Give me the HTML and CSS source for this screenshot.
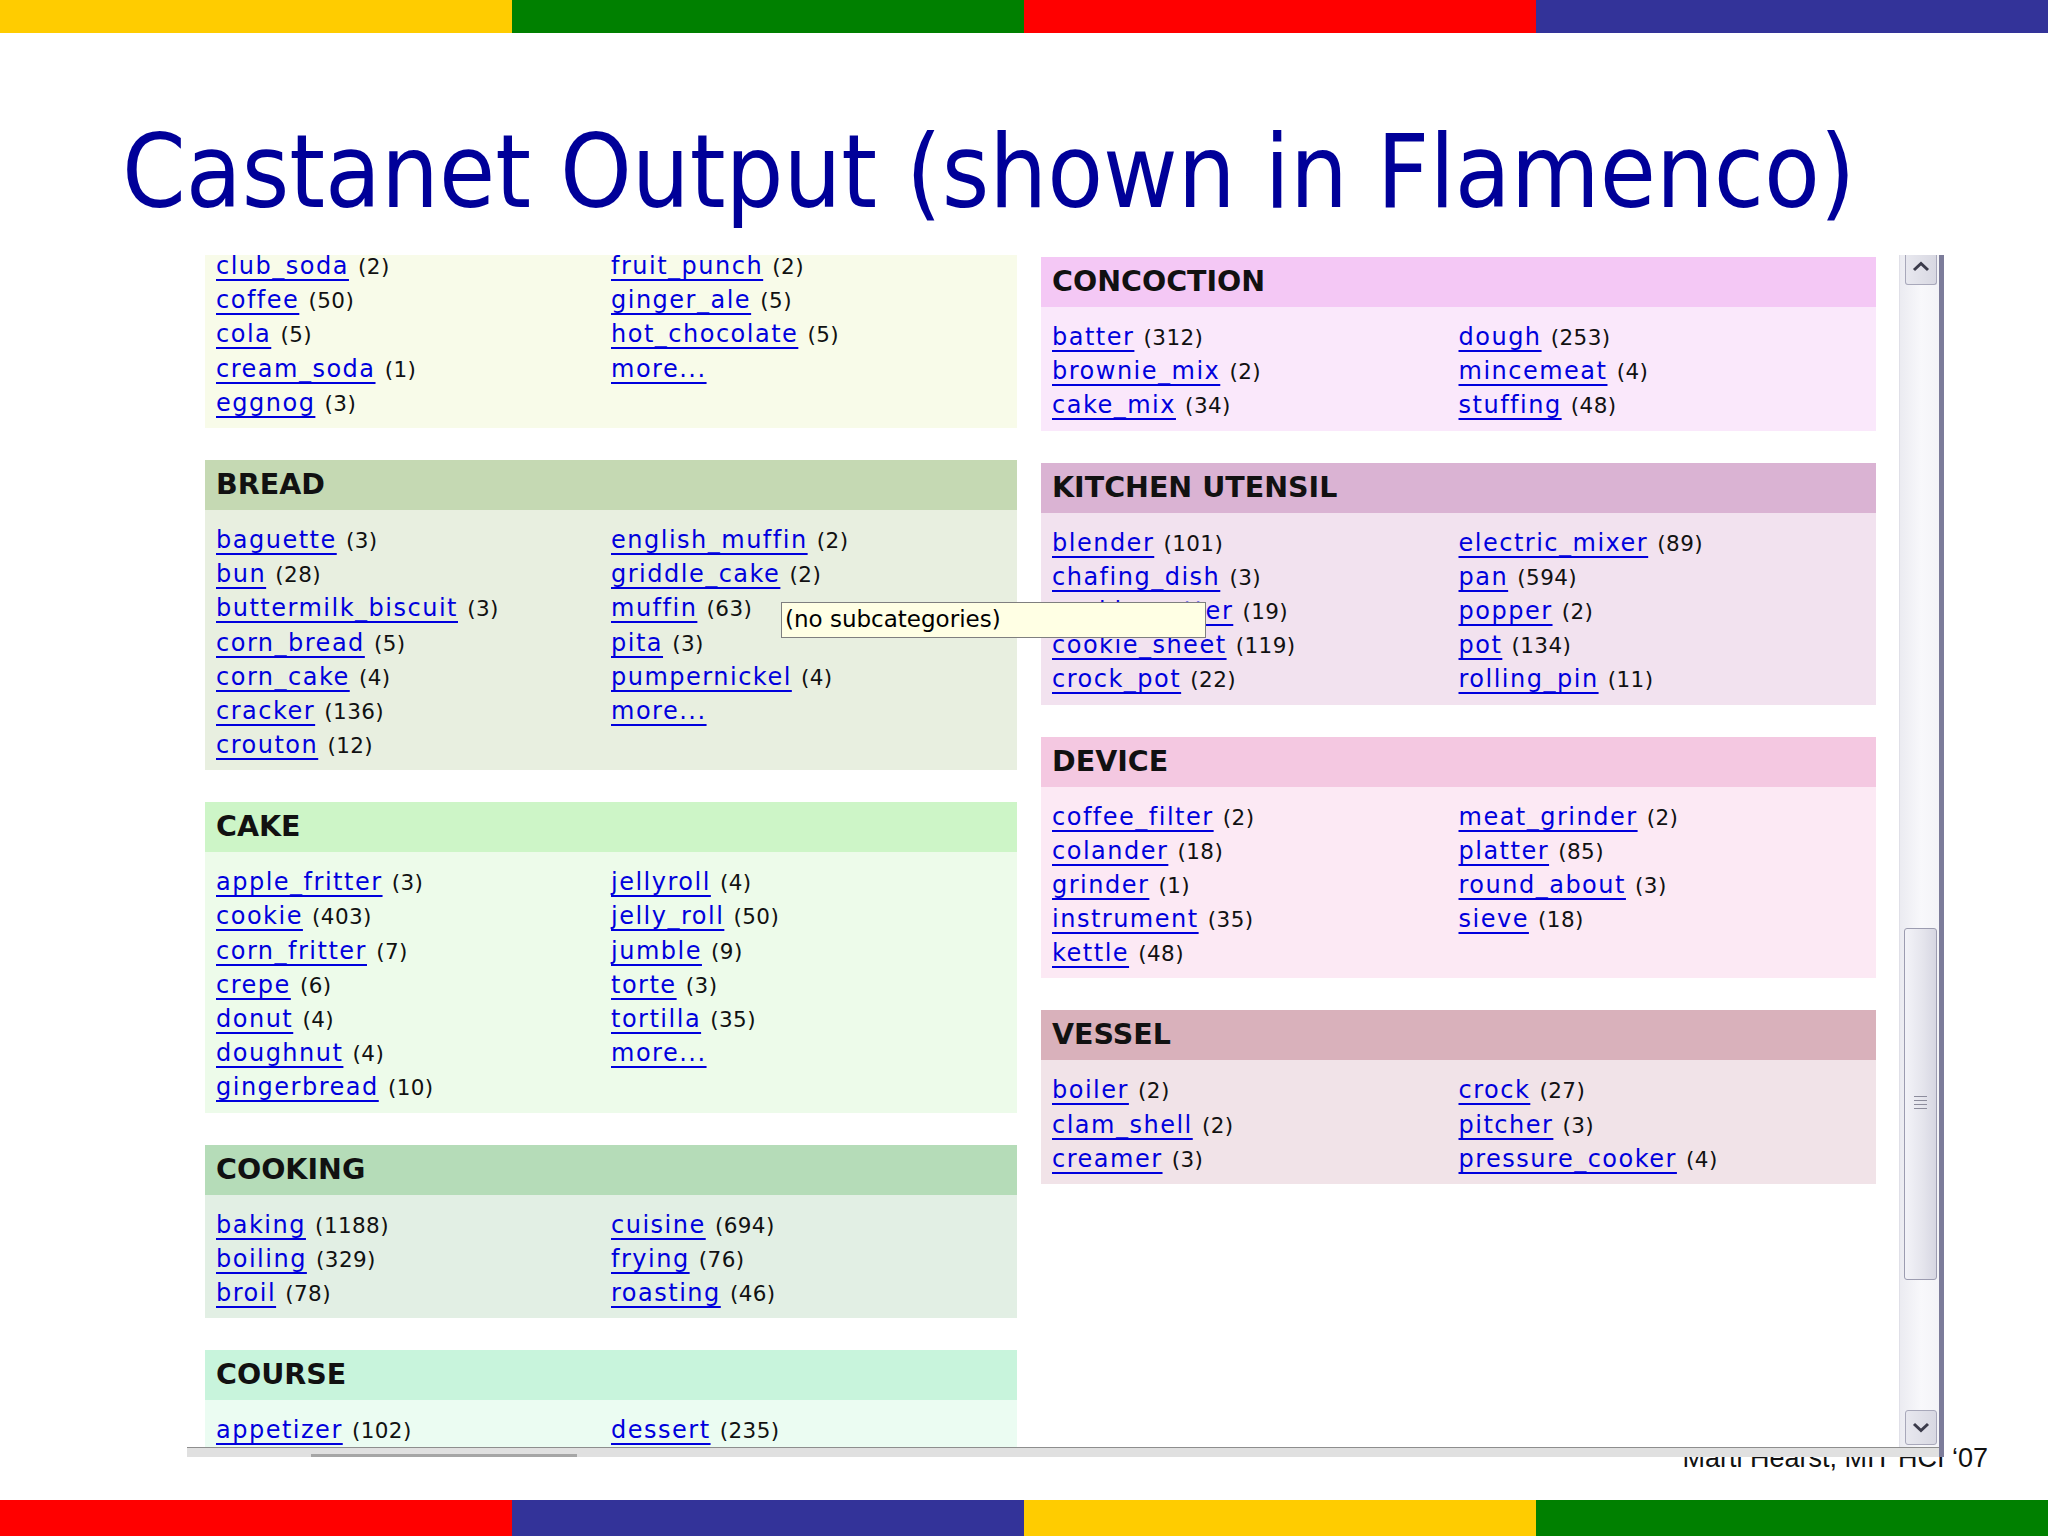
FILE: index.html
```html
<!DOCTYPE html>
<html>
<head>
<meta charset="utf-8">
<title>Castanet Output (shown in Flamenco)</title>
<link rel="stylesheet" href="styles.css">
</head>
<body>
<div class="slide">
  <div class="bar top"><span class="c-yellow"></span><span class="c-green"></span><span class="c-red"></span><span class="c-blue"></span></div>

  <h1 class="title">Castanet Output (shown in Flamenco)</h1>

  <div class="panel">
    <div class="viewport">
      <div class="col left">
        <section class="facet bev">
          <div class="body">
            <ul>
              <li><a href="#">club_soda</a> <span class="n">(2)</span></li>
              <li><a href="#">coffee</a> <span class="n">(50)</span></li>
              <li><a href="#">cola</a> <span class="n">(5)</span></li>
              <li><a href="#">cream_soda</a> <span class="n">(1)</span></li>
              <li><a href="#">eggnog</a> <span class="n">(3)</span></li>
            </ul>
            <ul>
              <li><a href="#">fruit_punch</a> <span class="n">(2)</span></li>
              <li><a href="#">ginger_ale</a> <span class="n">(5)</span></li>
              <li><a href="#">hot_chocolate</a> <span class="n">(5)</span></li>
              <li><a href="#">more...</a></li>
            </ul>
          </div>
        </section>

        <section class="facet bread">
          <h2>BREAD</h2>
          <div class="body">
            <ul>
              <li><a href="#">baguette</a> <span class="n">(3)</span></li>
              <li><a href="#">bun</a> <span class="n">(28)</span></li>
              <li><a href="#">buttermilk_biscuit</a> <span class="n">(3)</span></li>
              <li><a href="#">corn_bread</a> <span class="n">(5)</span></li>
              <li><a href="#">corn_cake</a> <span class="n">(4)</span></li>
              <li><a href="#">cracker</a> <span class="n">(136)</span></li>
              <li><a href="#">crouton</a> <span class="n">(12)</span></li>
            </ul>
            <ul>
              <li><a href="#">english_muffin</a> <span class="n">(2)</span></li>
              <li><a href="#">griddle_cake</a> <span class="n">(2)</span></li>
              <li><a href="#">muffin</a> <span class="n">(63)</span></li>
              <li><a href="#">pita</a> <span class="n">(3)</span></li>
              <li><a href="#">pumpernickel</a> <span class="n">(4)</span></li>
              <li><a href="#">more...</a></li>
            </ul>
          </div>
        </section>

        <section class="facet cake">
          <h2>CAKE</h2>
          <div class="body">
            <ul>
              <li><a href="#">apple_fritter</a> <span class="n">(3)</span></li>
              <li><a href="#">cookie</a> <span class="n">(403)</span></li>
              <li><a href="#">corn_fritter</a> <span class="n">(7)</span></li>
              <li><a href="#">crepe</a> <span class="n">(6)</span></li>
              <li><a href="#">donut</a> <span class="n">(4)</span></li>
              <li><a href="#">doughnut</a> <span class="n">(4)</span></li>
              <li><a href="#">gingerbread</a> <span class="n">(10)</span></li>
            </ul>
            <ul>
              <li><a href="#">jellyroll</a> <span class="n">(4)</span></li>
              <li><a href="#">jelly_roll</a> <span class="n">(50)</span></li>
              <li><a href="#">jumble</a> <span class="n">(9)</span></li>
              <li><a href="#">torte</a> <span class="n">(3)</span></li>
              <li><a href="#">tortilla</a> <span class="n">(35)</span></li>
              <li><a href="#">more...</a></li>
            </ul>
          </div>
        </section>

        <section class="facet cooking">
          <h2>COOKING</h2>
          <div class="body">
            <ul>
              <li><a href="#">baking</a> <span class="n">(1188)</span></li>
              <li><a href="#">boiling</a> <span class="n">(329)</span></li>
              <li><a href="#">broil</a> <span class="n">(78)</span></li>
            </ul>
            <ul>
              <li><a href="#">cuisine</a> <span class="n">(694)</span></li>
              <li><a href="#">frying</a> <span class="n">(76)</span></li>
              <li><a href="#">roasting</a> <span class="n">(46)</span></li>
            </ul>
          </div>
        </section>

        <section class="facet course">
          <h2>COURSE</h2>
          <div class="body">
            <ul>
              <li><a href="#">appetizer</a> <span class="n">(102)</span></li>
            </ul>
            <ul>
              <li><a href="#">dessert</a> <span class="n">(235)</span></li>
            </ul>
          </div>
        </section>
      </div>

      <div class="col right">
        <section class="facet concoction">
          <h2>CONCOCTION</h2>
          <div class="body">
            <ul>
              <li><a href="#">batter</a> <span class="n">(312)</span></li>
              <li><a href="#">brownie_mix</a> <span class="n">(2)</span></li>
              <li><a href="#">cake_mix</a> <span class="n">(34)</span></li>
            </ul>
            <ul>
              <li><a href="#">dough</a> <span class="n">(253)</span></li>
              <li><a href="#">mincemeat</a> <span class="n">(4)</span></li>
              <li><a href="#">stuffing</a> <span class="n">(48)</span></li>
            </ul>
          </div>
        </section>

        <section class="facet utensil">
          <h2>KITCHEN UTENSIL</h2>
          <div class="body">
            <ul>
              <li><a href="#">blender</a> <span class="n">(101)</span></li>
              <li><a href="#">chafing_dish</a> <span class="n">(3)</span></li>
              <li><a href="#">cookie_cutter</a> <span class="n">(19)</span></li>
              <li><a href="#">cookie_sheet</a> <span class="n">(119)</span></li>
              <li><a href="#">crock_pot</a> <span class="n">(22)</span></li>
            </ul>
            <ul>
              <li><a href="#">electric_mixer</a> <span class="n">(89)</span></li>
              <li><a href="#">pan</a> <span class="n">(594)</span></li>
              <li><a href="#">popper</a> <span class="n">(2)</span></li>
              <li><a href="#">pot</a> <span class="n">(134)</span></li>
              <li><a href="#">rolling_pin</a> <span class="n">(11)</span></li>
            </ul>
          </div>
        </section>

        <section class="facet device">
          <h2>DEVICE</h2>
          <div class="body">
            <ul>
              <li><a href="#">coffee_filter</a> <span class="n">(2)</span></li>
              <li><a href="#">colander</a> <span class="n">(18)</span></li>
              <li><a href="#">grinder</a> <span class="n">(1)</span></li>
              <li><a href="#">instrument</a> <span class="n">(35)</span></li>
              <li><a href="#">kettle</a> <span class="n">(48)</span></li>
            </ul>
            <ul>
              <li><a href="#">meat_grinder</a> <span class="n">(2)</span></li>
              <li><a href="#">platter</a> <span class="n">(85)</span></li>
              <li><a href="#">round_about</a> <span class="n">(3)</span></li>
              <li><a href="#">sieve</a> <span class="n">(18)</span></li>
            </ul>
          </div>
        </section>

        <section class="facet vessel">
          <h2>VESSEL</h2>
          <div class="body">
            <ul>
              <li><a href="#">boiler</a> <span class="n">(2)</span></li>
              <li><a href="#">clam_shell</a> <span class="n">(2)</span></li>
              <li><a href="#">creamer</a> <span class="n">(3)</span></li>
            </ul>
            <ul>
              <li><a href="#">crock</a> <span class="n">(27)</span></li>
              <li><a href="#">pitcher</a> <span class="n">(3)</span></li>
              <li><a href="#">pressure_cooker</a> <span class="n">(4)</span></li>
            </ul>
          </div>
        </section>
      </div>

      <div class="tooltip">(no subcategories)</div>
    </div>

    <div class="vscroll">
      <div class="btn up">
        <svg width="18" height="11" viewBox="0 0 18 11"><path d="M2 9 L9 2.5 L16 9" fill="none" stroke="#3b3b4b" stroke-width="3" stroke-linejoin="miter"/></svg>
      </div>
      <div class="track">
        <div class="thumb"><span class="grip"></span></div>
      </div>
      <div class="btn down">
        <svg width="18" height="11" viewBox="0 0 18 11"><path d="M2 2 L9 8.5 L16 2" fill="none" stroke="#3b3b4b" stroke-width="3" stroke-linejoin="miter"/></svg>
      </div>
    </div>

    <div class="hscroll"><span class="hthumb"></span></div>
  </div>

  <div class="footer">Marti Hearst, MIT HCI ‘07</div>

  <div class="bar bottom"><span class="c-red"></span><span class="c-blue"></span><span class="c-yellow"></span><span class="c-green"></span></div>
</div>
</body>
</html>
```

FILE: styles.css
```css
* { box-sizing: border-box; }

html, body {
  margin: 0;
  padding: 0;
}

body {
  width: 2048px;
  height: 1536px;
  overflow: hidden;
  background: #ffffff;
}

.slide {
  position: relative;
  width: 2048px;
  height: 1536px;
  display: flex;
  flex-direction: column;
}

/* colour bars */
.bar {
  display: flex;
  flex: none;
}
.bar span { flex: 1; }
.bar.top { height: 33px; }
.bar.bottom { height: 36px; margin-top: auto; }

.c-yellow { background: #ffcc00; }
.c-green  { background: #008000; }
.c-red    { background: #ff0000; }
.c-blue   { background: #333399; }

/* title */
.title {
  flex: none;
  margin: 88px 0 0 122px;
  height: 103px;
  font-family: "DejaVu Sans Condensed", "DejaVu Sans", sans-serif;
  font-stretch: condensed;
  font-weight: normal;
  font-size: 101.5px;
  line-height: 103px;
  color: #000099;
  white-space: nowrap;
}

/* screenshot panel */
.panel {
  flex: none;
  position: relative;
  z-index: 1;
  margin: 31px 0 0 187px;
  width: 1757px;
  height: 1202px;
  display: grid;
  grid-template-columns: 1712px 40px;
  grid-template-rows: 1192px 10px;
  border-right: 5px solid #7c7c9a;
  background: #ffffff;
}

.viewport {
  position: relative;
  overflow: hidden;
  display: grid;
  grid-template-columns: 812px 835px;
  column-gap: 24px;
  align-items: start;
  padding: 2px 0 0 18px;
}

.col.left { margin-top: -21px; }

.facet { margin-bottom: 32px; }

.facet h2 {
  margin: 0;
  height: 50px;
  padding-left: 11px;
  font-family: "DejaVu Sans", sans-serif;
  font-weight: bold;
  font-size: 28.5px;
  line-height: 50px;
  color: #111111;
  white-space: nowrap;
}

.facet .body {
  display: grid;
  grid-template-columns: 1fr 1fr;
  padding: 13px 11px 8px;
}

.facet ul {
  list-style: none;
  margin: 0;
  padding: 0;
}

.facet li {
  height: 34.2px;
  font-family: "DejaVu Sans", sans-serif;
  font-size: 24px;
  line-height: 34.2px;
  letter-spacing: 1.5px;
  color: #111111;
  white-space: nowrap;
}

.facet a {
  color: #0000dd;
  text-decoration: underline;
  text-decoration-thickness: 2px;
  text-underline-offset: 5px;
}

.facet .n {
  font-size: 21.5px;
  line-height: 20px;
  letter-spacing: 0.4px;
}

/* facet colours */
.bev .body        { background: #f8fbe9; }
.bread h2         { background: #c5d9b3; }
.bread .body      { background: #e8efe0; }
.cake h2          { background: #cdf5c7; }
.cake .body       { background: #edfbea; }
.cooking h2       { background: #b5dcb8; }
.cooking .body    { background: #e2efe4; }
.course h2        { background: #c8f4dc; }
.course .body     { background: #ebfcf2; }
.concoction h2    { background: #f4c8f5; }
.concoction .body { background: #fae8fb; }
.utensil h2       { background: #dab3d3; }
.utensil .body    { background: #f2e2ef; }
.device h2        { background: #f4c8e1; }
.device .body     { background: #fce9f4; }
.vessel h2        { background: #d9b1bb; }
.vessel .body     { background: #f1e3e8; }

/* tooltip */
.tooltip {
  position: absolute;
  left: 594px;
  top: 347px;
  width: 425px;
  height: 36px;
  padding-left: 3px;
  border: 1px solid #7f7f7f;
  background: #ffffe4;
  font-family: "DejaVu Sans", sans-serif;
  font-size: 23px;
  line-height: 33px;
  color: #000000;
  white-space: nowrap;
}

/* vertical scrollbar */
.vscroll {
  display: flex;
  flex-direction: column;
  background: linear-gradient(90deg, #ebebf1 0%, #f8f8fb 55%, #f3f3f7 100%);
  border-left: 1px solid #e0e0e8;
}

.btn {
  flex: none;
  margin: 0 2px 0 5px;
  border: 1px solid #a8a8ba;
  border-radius: 3px;
  background: linear-gradient(90deg, #e8e8ef 0%, #d8d8e2 100%);
  display: flex;
  align-items: center;
  justify-content: center;
}

.btn.up {
  height: 30px;
  border-top: none;
  border-radius: 0 0 3px 3px;
  padding-bottom: 6px;
}

.btn.down {
  height: 35px;
  margin-bottom: 2px;
}

.track {
  flex: 1;
  display: flex;
  flex-direction: column;
}

.thumb {
  flex: none;
  margin: 643px 2px 0 4px;
  height: 352px;
  border: 1px solid #9c9cb0;
  border-radius: 3px;
  background: linear-gradient(90deg, #f3f3f8 0%, #e4e4ec 60%, #d6d6e2 100%);
  display: flex;
  align-items: center;
  justify-content: center;
}

.grip {
  width: 13px;
  height: 16px;
  background: repeating-linear-gradient(180deg, #8c8c9c 0, #8c8c9c 1px, transparent 1px, transparent 4px);
}

/* horizontal scrollbar (cut off) */
.hscroll {
  grid-column: 1 / span 2;
  border-top: 1px solid #8e8e8e;
  background: #e0e0e0;
  display: flex;
  align-items: flex-end;
}

.hthumb {
  margin-left: 124px;
  width: 266px;
  height: 3px;
  background: #a6a6a6;
}

/* footer */
.footer {
  position: absolute;
  right: 60px;
  top: 1445px;
  font-family: "Liberation Sans", Arial, sans-serif;
  font-size: 27px;
  line-height: 27px;
  color: #111111;
  white-space: nowrap;
}
```
